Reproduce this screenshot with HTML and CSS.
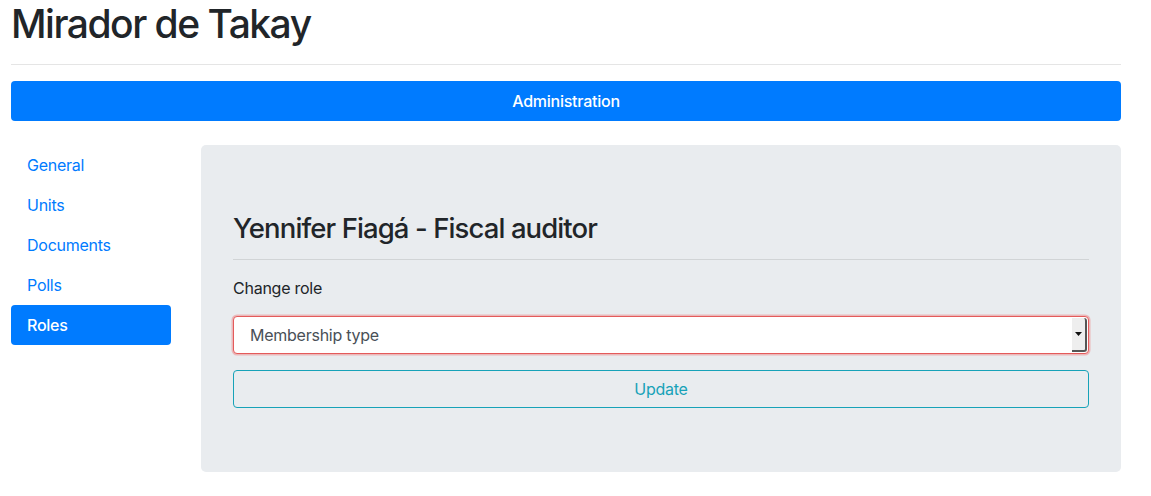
FILE: index.html
```html
<!DOCTYPE html>
<html lang="en">
<head>
<meta charset="utf-8">
<title>Mirador de Takay</title>
<link rel="stylesheet" href="styles.css">
</head>
<body>
<div class="container">
  <h1 class="title">Mirador de Takay</h1>
  <hr class="rule">
  <div class="admin-bar">Administration</div>
  <div class="row">
    <nav class="side-nav">
      <a class="nav-link" href="#">General</a>
      <a class="nav-link" href="#">Units</a>
      <a class="nav-link" href="#">Documents</a>
      <a class="nav-link" href="#">Polls</a>
      <a class="nav-link active" href="#">Roles</a>
    </nav>
    <main class="jumbotron">
      <h3 class="person">Yennifer Fiagá - Fiscal auditor</h3>
      <hr class="rule person-rule">
      <div class="form-group">
        <label class="label">Change role</label>
        <div class="select">
          <span class="select-text">Membership type</span>
          <span class="select-arrow"><svg width="7" height="4" viewBox="0 0 7 4"><path d="M0 0h7L3.5 4z" fill="#111"/></svg></span>
        </div>
      </div>
      <button class="btn-update" type="button">Update</button>
    </main>
  </div>
</div>
</body>
</html>
```

FILE: styles.css
```css
* { box-sizing: border-box; }
html, body {
  margin: 0;
  padding: 0;
  background: #fff;
}
body {
  font-family: Inter, "Noto Sans", "Liberation Sans", sans-serif;
  font-size: 16px;
  line-height: 1.5;
  color: #212529;
  letter-spacing: -0.25px;
}
.container {
  width: 1110px;
  margin-left: 11px;
}
.title {
  margin: 0 0 8px;
  font-size: 39px;
  line-height: 48px;
  font-weight: 500;
  letter-spacing: -1.5px;
}
.rule {
  margin: 16px 0;
  border: 0;
  border-top: 1px solid rgba(0,0,0,0.1);
  height: 0;
}
.person-rule {
  margin-top: 13px;
}
.admin-bar {
  height: 40px;
  background: #007bff;
  color: #fff;
  border-radius: 4px;
  display: flex;
  align-items: center;
  justify-content: center;
  font-weight: 500;
  font-size: 16px;
}
.row {
  display: flex;
  gap: 30px;
  margin-top: 24px;
  align-items: flex-start;
}
.side-nav {
  width: 160px;
  flex: none;
  display: flex;
  flex-direction: column;
}
.nav-link {
  display: block;
  height: 40px;
  line-height: 40px;
  padding: 0 16px;
  color: #007bff;
  text-decoration: none;
  border-radius: 4px;
}
.nav-link.active {
  background: #007bff;
  color: #fff;
  font-weight: 500;
}
.jumbotron {
  flex: 1;
  background: #e9ecef;
  border-radius: 5px;
  padding: 67px 32px 64px;
}
.person {
  margin: 0;
  font-size: 27.5px;
  line-height: 33.6px;
  font-weight: 500;
  letter-spacing: -0.9px;
}
.form-group {
  margin-bottom: 16px;
}
.label {
  display: block;
  margin-bottom: 16px;
  font-size: 16px;
}
.select {
  height: 38px;
  background: #fff;
  border: 1px solid #e45b5b;
  border-radius: 4px;
  box-shadow: 0 0 0 1.5px rgba(240, 90, 90, 0.35);
  display: flex;
  align-items: stretch;
  padding-left: 16px;
}
.select-text {
  flex: 1;
  display: flex;
  align-items: center;
  font-size: 16px;
  color: #495057;
}
.select-arrow {
  width: 15px;
  margin: 1px 1px 1px 0;
  background: #eeeeee;
  border-right: 2px solid #555;
  border-bottom: 2px solid #555;
  border-radius: 0 3px 3px 0;
  display: flex;
  align-items: center;
  justify-content: center;
}
.btn-update {
  display: block;
  width: 100%;
  height: 38px;
  background: transparent;
  border: 1px solid #17a2b8;
  border-radius: 4px;
  color: #17a2b8;
  font-family: inherit;
  font-size: 16px;
  letter-spacing: inherit;
}
```
